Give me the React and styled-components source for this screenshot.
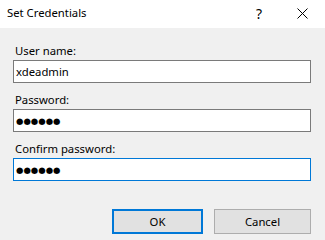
import React from "react";
import styled, { createGlobalStyle } from "styled-components";

const Global = createGlobalStyle`
  html, body { margin: 0; padding: 0; background: #f0f0f0; }
  body { font-family: "Segoe UI", "Noto Sans", "Open Sans", sans-serif; font-size: 11.3px; color: #000; }
  * { box-sizing: border-box; }
`;

const Dialog = styled.div`
  width: 325px;
  height: 240px;
  display: flex;
  flex-direction: column;
  background: #f0f0f0;
`;

const TitleBar = styled.div`
  height: 28px;
  background: #fff;
  display: flex;
  align-items: center;
  padding-left: 7px;
`;

const Title = styled.div`
  flex: 1;
  font-size: 11.3px;
  line-height: 16px;
  margin-top: -2px;
`;

const TitleButton = styled.div`
  width: ${(p) => p.$w}px;
  margin-right: ${(p) => p.$mr || 0}px;
  height: 28px;
  display: flex;
  align-items: center;
  justify-content: center;
  font-size: 14px;
  color: #000;
  margin-top: -1px;
`;

const Body = styled.div`
  display: flex;
  flex-direction: column;
  padding: 15px 14px 0 13px;
  gap: 9px;
`;

const Field = styled.div`
  display: flex;
  flex-direction: column;
`;

const Label = styled.label`
  line-height: 16px;
  height: 17px;
  padding-left: 2px;
`;

const Input = styled.div`
  height: 23px;
  background: #fff;
  border: 1px solid ${(p) => (p.$focused ? "#0078d7" : "#7a7a7a")};
  display: flex;
  align-items: center;
  padding-left: 2px;
  line-height: 16px;
`;

const Dots = styled.span`
  font-size: 8.5px;
  font-family: "DejaVu Sans", sans-serif;
  padding-top: 1px;
`;

const Buttons = styled.div`
  display: flex;
  justify-content: flex-end;
  gap: 11px;
  padding: 28px 14px 0 0;
`;

const Button = styled.button`
  height: 25px;
  width: ${(p) => p.$w}px;
  background: #e1e1e1;
  border: ${(p) => (p.$default ? "2px solid #0078d7" : "1px solid #adadad")};
  font-family: inherit;
  font-size: 11.3px;
  color: #000;
  padding: 0;
`;

export default function App() {
  return (
    <>
      <Global />
      <Dialog>
        <TitleBar>
          <Title>Set Credentials</Title>
          <TitleButton $w={30} $mr={5}>?</TitleButton>
          <TitleButton $w={46}>
            <svg width="11" height="11" viewBox="0 0 11 11">
              <path d="M0.5 0.5 L10.5 10.5 M10.5 0.5 L0.5 10.5" stroke="#000" strokeWidth="1" />
            </svg>
          </TitleButton>
        </TitleBar>
        <Body>
          <Field>
            <Label>User name:</Label>
            <Input>xdeadmin</Input>
          </Field>
          <Field>
            <Label>Password:</Label>
            <Input><Dots>●●●●●●</Dots></Input>
          </Field>
          <Field>
            <Label>Confirm password:</Label>
            <Input $focused><Dots>●●●●●●</Dots></Input>
          </Field>
        </Body>
        <Buttons>
          <Button $default $w={91}>OK</Button>
          <Button $w={97}>Cancel</Button>
        </Buttons>
      </Dialog>
    </>
  );
}
